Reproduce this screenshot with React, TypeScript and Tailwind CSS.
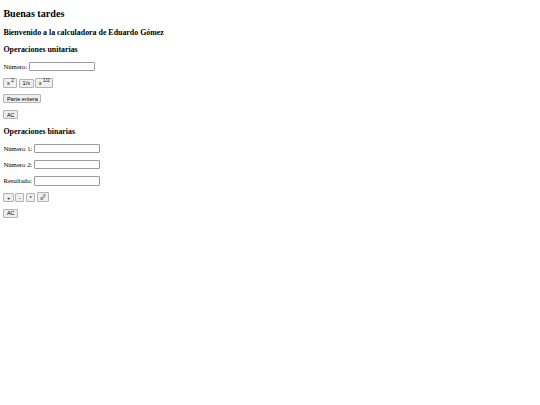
import React from "react";

// Calculator page: headings, labelled text fields and small native-looking buttons.

function Btn({ children }: { children: React.ReactNode }) {
  return (
    <button
      type="button"
      className="inline-block align-baseline rounded-[1px] border border-[#b3b3b3] bg-[#efefef] px-[2.5px] py-[0.5px] font-['Liberation_Sans',Arial,sans-serif] text-[5.625px] leading-[normal] text-black"
    >
      {children}
    </button>
  );
}

function Sup({ children }: { children: React.ReactNode }) {
  return <sup className="static align-super text-[83%] leading-none">{children}</sup>;
}

function Field({ label }: { label: string }) {
  return (
    <p className="my-[6.75px]">
      {label}{" "}
      <input
        type="text"
        className="inline-block h-[9.4px] w-[66px] rounded-[1px] border border-[#9c9c9c] bg-white px-[1px] align-baseline text-[5.625px]"
      />
    </p>
  );
}

export default function App() {
  return (
    <div className="min-h-[405px] w-[540px] bg-white">
      <div className="mx-[3.375px] font-['Liberation_Serif','Times_New_Roman',serif] text-[6.75px] leading-[normal] text-black">
        <h2 className="my-[8.4px] text-[10.125px] font-bold">Buenas tardes</h2>
        <h3 className="my-[7.9px] text-[7.9px] font-bold">Bienvenido a la calculadora de Eduardo Gómez</h3>

        <h3 className="my-[7.9px] text-[7.9px] font-bold">Operaciones unitarias</h3>
        <Field label="Número:" />
        <p className="my-[6.75px]">
          <Btn>
            x <Sup>2</Sup>
          </Btn>{" "}
          <Btn>1/x</Btn>{" "}
          <Btn>
            x <Sup>1/2</Sup>
          </Btn>
        </p>
        <p className="my-[6.75px]">
          <Btn>Parte entera</Btn>
        </p>
        <p className="my-[6.75px]">
          <Btn>AC</Btn>
        </p>

        <h3 className="my-[7.9px] text-[7.9px] font-bold">Operaciones binarias</h3>
        <Field label="Número 1:" />
        <Field label="Número 2:" />
        <Field label="Resultado:" />
        <p className="my-[6.75px]">
          <Btn>+</Btn> <Btn>-</Btn> <Btn>*</Btn>{" "}
          <Btn>
            x<Sup>y</Sup>
          </Btn>
        </p>
        <p className="my-[6.75px]">
          <Btn>AC</Btn>
        </p>
      </div>
    </div>
  );
}
